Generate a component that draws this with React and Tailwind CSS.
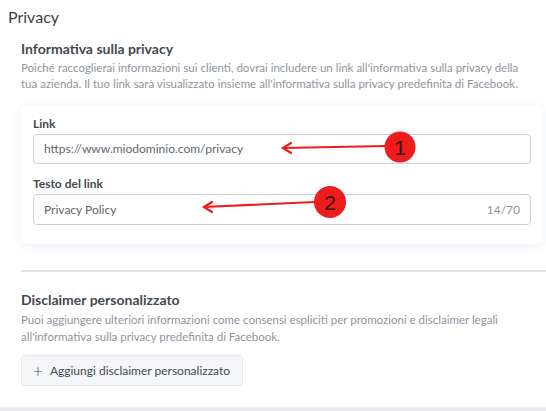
export default function App() {
  return (
    <div className="relative w-[546px] h-[411px] overflow-hidden bg-white font-['Lato',sans-serif] flex flex-col">
      <h1 className="pl-2 pt-[6px] text-[16px] leading-[22px] text-[#3b3f45]">Privacy</h1>

      <div className="pl-[21px] pt-[11px]">
        <h2 className="text-[14px] leading-[20px] font-bold text-[#444950]">Informativa sulla privacy</h2>
        <p className="mt-[1px] text-[11.5px] leading-[16px] text-[#90949c]">
          Poiché raccoglierai informazioni sui clienti, dovrai includere un link all'informativa sulla privacy della
          <br />
          tua azienda. Il tuo link sarà visualizzato insieme all'informativa sulla privacy predefinita di Facebook.
        </p>

        <div className="mt-[14px] mr-[3px] rounded-md bg-white px-3 pt-[10px] pb-[19px] shadow-[0_2px_12px_rgba(190,205,230,0.35)]">
          <label className="block text-[12px] leading-[16px] font-bold text-[#444950]">Link</label>
          <div className="mt-[2px] flex h-[30px] items-center rounded border border-[#ccd0d5] px-[10px] text-[12px] text-[#606770]">
            https://www.miodominio.com/privacy
          </div>
          <label className="mt-[12px] block text-[12px] leading-[16px] font-bold text-[#444950]">Testo del link</label>
          <div className="mt-[2px] flex h-[31px] items-center justify-between rounded border border-[#ccd0d5] px-[10px] text-[12px] text-[#606770]">
            <span>Privacy Policy</span>
            <span className="text-[#90949c]">14/70</span>
          </div>
        </div>

        <div className="mt-[26px] h-[2px] bg-[#e1e4e8]" />

        <h2 className="mt-[18px] text-[14px] leading-[20px] font-bold text-[#444950]">Disclaimer personalizzato</h2>
        <p className="mt-[1px] text-[11.5px] leading-[17px] text-[#90949c]">
          Puoi aggiungere ulteriori informazioni come consensi espliciti per promozioni e disclaimer legali all'informativa sulla privacy predefinita di Facebook.
        </p>
        <button className="mt-[10px] flex h-[31px] w-[222px] items-center gap-[7px] whitespace-nowrap rounded border border-[#e4e6eb] bg-[#f5f6f7] px-[11px] text-[12px] text-[#444950]">
          <span className="text-[17px] leading-none font-light">+</span>
          Aggiungi disclaimer personalizzato
        </button>
      </div>

      <div className="mt-auto h-[4px] bg-[#e9eaee]" />

      <svg className="absolute inset-0 pointer-events-none" width="546" height="411">
        <g stroke="#ee1c1c" strokeWidth="2.2" fill="none" strokeLinecap="round">
          <line x1="386" y1="146" x2="283" y2="148" />
          <polyline points="291,143 283,148 291,153" />
          <line x1="315" y1="202" x2="204" y2="207" />
          <polyline points="212,202 204,207 212,212" />
        </g>
        <circle cx="400" cy="147" r="15.5" fill="#ee1c1c" />
        <circle cx="330" cy="202" r="16" fill="#ee1c1c" />
        <text x="400" y="155" textAnchor="middle" fontSize="21" fontFamily="'Liberation Sans', sans-serif" fill="#3a0a0a">1</text>
        <text x="330" y="210" textAnchor="middle" fontSize="21" fontFamily="'Liberation Sans', sans-serif" fill="#3a0a0a">2</text>
      </svg>
    </div>
  )
}
